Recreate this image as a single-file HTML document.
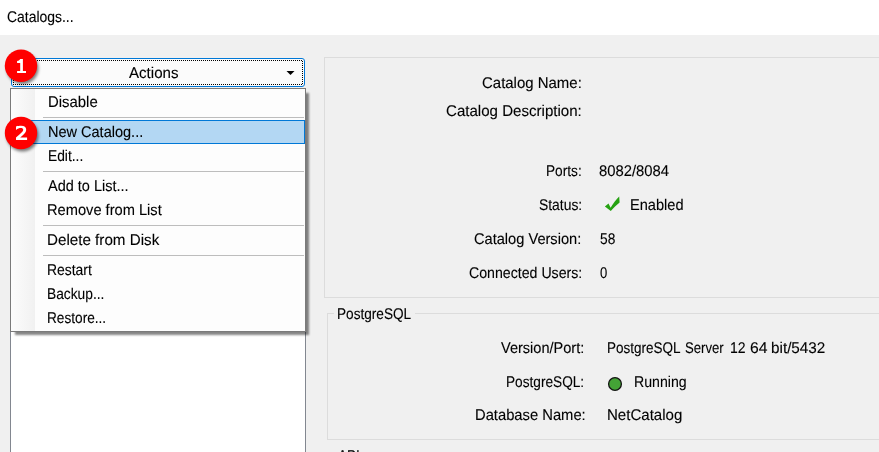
<!DOCTYPE html>
<html><head><meta charset="utf-8"><style>
html,body{margin:0;padding:0}
body{width:879px;height:452px;overflow:hidden;position:relative;background:#f0f0f0;font-family:"Liberation Sans",sans-serif;color:#000}
.t{position:absolute;font-size:15.5px;line-height:15.5px;text-rendering:geometricPrecision;white-space:pre;transform-origin:0 0;-webkit-text-stroke:0.12px #000}
.hdr{position:absolute;left:0;top:0;width:879px;height:35px;background:#fff}
.list{position:absolute;left:10px;top:90px;width:294px;height:400px;background:#fff;border:1px solid #828790}
.btn{position:absolute;left:11px;top:58px;width:292px;height:27px;border:1px solid #0078d7;border-radius:3px;background:#fbfbfb}
.dots{position:absolute;left:13px;top:60px;width:290px;height:25px;}
.grp{position:absolute;border:1px solid #dcdcdc}
.menu{position:absolute;left:10px;top:88px;width:294px;height:242px;border:1px solid #7a7a7a;background:#fdfdfd;box-shadow:4px 4px 2px -1px rgba(0,0,0,.48)}
.gut{position:absolute;left:11px;top:89px;width:24px;height:242px;background:linear-gradient(to right,#fcfcfc,#f1f1f1)}
.sep{position:absolute;left:43px;width:261px;height:1px;background:#bdbdbd}
.hl{position:absolute;left:12px;top:120px;width:291px;height:22px;border:1px solid #0078d7;background:#b3d7f3}
</style></head><body>
<div class="hdr"></div>
<span class="t" style="left:7.40px;top:10px;transform:scaleX(0.8986)">Catalogs...</span>
<div class="list"></div>
<div class="grp" style="left:324px;top:57px;width:600px;height:239px"></div>
<div class="grp" style="left:327px;top:313px;width:600px;height:125px"></div>
<div style="position:absolute;left:334px;top:305px;width:81px;height:16px;background:#f0f0f0"></div>
<div class="grp" style="left:327px;top:455px;width:600px;height:100px"></div>
<div style="position:absolute;left:334px;top:447px;width:30px;height:16px;background:#f0f0f0"></div>

<div class="btn"></div>
<svg style="position:absolute;left:0;top:0" width="879" height="452">
<path d="M13,60h1v1h-1zM15,60h1v1h-1zM17,60h1v1h-1zM19,60h1v1h-1zM21,60h1v1h-1zM23,60h1v1h-1zM25,60h1v1h-1zM27,60h1v1h-1zM29,60h1v1h-1zM31,60h1v1h-1zM33,60h1v1h-1zM35,60h1v1h-1zM37,60h1v1h-1zM39,60h1v1h-1zM41,60h1v1h-1zM43,60h1v1h-1zM45,60h1v1h-1zM47,60h1v1h-1zM49,60h1v1h-1zM51,60h1v1h-1zM53,60h1v1h-1zM55,60h1v1h-1zM57,60h1v1h-1zM59,60h1v1h-1zM61,60h1v1h-1zM63,60h1v1h-1zM65,60h1v1h-1zM67,60h1v1h-1zM69,60h1v1h-1zM71,60h1v1h-1zM73,60h1v1h-1zM75,60h1v1h-1zM77,60h1v1h-1zM79,60h1v1h-1zM81,60h1v1h-1zM83,60h1v1h-1zM85,60h1v1h-1zM87,60h1v1h-1zM89,60h1v1h-1zM91,60h1v1h-1zM93,60h1v1h-1zM95,60h1v1h-1zM97,60h1v1h-1zM99,60h1v1h-1zM101,60h1v1h-1zM103,60h1v1h-1zM105,60h1v1h-1zM107,60h1v1h-1zM109,60h1v1h-1zM111,60h1v1h-1zM113,60h1v1h-1zM115,60h1v1h-1zM117,60h1v1h-1zM119,60h1v1h-1zM121,60h1v1h-1zM123,60h1v1h-1zM125,60h1v1h-1zM127,60h1v1h-1zM129,60h1v1h-1zM131,60h1v1h-1zM133,60h1v1h-1zM135,60h1v1h-1zM137,60h1v1h-1zM139,60h1v1h-1zM141,60h1v1h-1zM143,60h1v1h-1zM145,60h1v1h-1zM147,60h1v1h-1zM149,60h1v1h-1zM151,60h1v1h-1zM153,60h1v1h-1zM155,60h1v1h-1zM157,60h1v1h-1zM159,60h1v1h-1zM161,60h1v1h-1zM163,60h1v1h-1zM165,60h1v1h-1zM167,60h1v1h-1zM169,60h1v1h-1zM171,60h1v1h-1zM173,60h1v1h-1zM175,60h1v1h-1zM177,60h1v1h-1zM179,60h1v1h-1zM181,60h1v1h-1zM183,60h1v1h-1zM185,60h1v1h-1zM187,60h1v1h-1zM189,60h1v1h-1zM191,60h1v1h-1zM193,60h1v1h-1zM195,60h1v1h-1zM197,60h1v1h-1zM199,60h1v1h-1zM201,60h1v1h-1zM203,60h1v1h-1zM205,60h1v1h-1zM207,60h1v1h-1zM209,60h1v1h-1zM211,60h1v1h-1zM213,60h1v1h-1zM215,60h1v1h-1zM217,60h1v1h-1zM219,60h1v1h-1zM221,60h1v1h-1zM223,60h1v1h-1zM225,60h1v1h-1zM227,60h1v1h-1zM229,60h1v1h-1zM231,60h1v1h-1zM233,60h1v1h-1zM235,60h1v1h-1zM237,60h1v1h-1zM239,60h1v1h-1zM241,60h1v1h-1zM243,60h1v1h-1zM245,60h1v1h-1zM247,60h1v1h-1zM249,60h1v1h-1zM251,60h1v1h-1zM253,60h1v1h-1zM255,60h1v1h-1zM257,60h1v1h-1zM259,60h1v1h-1zM261,60h1v1h-1zM263,60h1v1h-1zM265,60h1v1h-1zM267,60h1v1h-1zM269,60h1v1h-1zM271,60h1v1h-1zM273,60h1v1h-1zM275,60h1v1h-1zM277,60h1v1h-1zM279,60h1v1h-1zM281,60h1v1h-1zM283,60h1v1h-1zM285,60h1v1h-1zM287,60h1v1h-1zM289,60h1v1h-1zM291,60h1v1h-1zM293,60h1v1h-1zM295,60h1v1h-1zM297,60h1v1h-1zM299,60h1v1h-1zM301,60h1v1h-1zM302,61h1v1h-1zM302,63h1v1h-1zM302,65h1v1h-1zM302,67h1v1h-1zM302,69h1v1h-1zM302,71h1v1h-1zM302,73h1v1h-1zM302,75h1v1h-1zM302,77h1v1h-1zM302,79h1v1h-1zM302,81h1v1h-1zM302,83h1v1h-1zM13,84h1v1h-1zM15,84h1v1h-1zM17,84h1v1h-1zM19,84h1v1h-1zM21,84h1v1h-1zM23,84h1v1h-1zM25,84h1v1h-1zM27,84h1v1h-1zM29,84h1v1h-1zM31,84h1v1h-1zM33,84h1v1h-1zM35,84h1v1h-1zM37,84h1v1h-1zM39,84h1v1h-1zM41,84h1v1h-1zM43,84h1v1h-1zM45,84h1v1h-1zM47,84h1v1h-1zM49,84h1v1h-1zM51,84h1v1h-1zM53,84h1v1h-1zM55,84h1v1h-1zM57,84h1v1h-1zM59,84h1v1h-1zM61,84h1v1h-1zM63,84h1v1h-1zM65,84h1v1h-1zM67,84h1v1h-1zM69,84h1v1h-1zM71,84h1v1h-1zM73,84h1v1h-1zM75,84h1v1h-1zM77,84h1v1h-1zM79,84h1v1h-1zM81,84h1v1h-1zM83,84h1v1h-1zM85,84h1v1h-1zM87,84h1v1h-1zM89,84h1v1h-1zM91,84h1v1h-1zM93,84h1v1h-1zM95,84h1v1h-1zM97,84h1v1h-1zM99,84h1v1h-1zM101,84h1v1h-1zM103,84h1v1h-1zM105,84h1v1h-1zM107,84h1v1h-1zM109,84h1v1h-1zM111,84h1v1h-1zM113,84h1v1h-1zM115,84h1v1h-1zM117,84h1v1h-1zM119,84h1v1h-1zM121,84h1v1h-1zM123,84h1v1h-1zM125,84h1v1h-1zM127,84h1v1h-1zM129,84h1v1h-1zM131,84h1v1h-1zM133,84h1v1h-1zM135,84h1v1h-1zM137,84h1v1h-1zM139,84h1v1h-1zM141,84h1v1h-1zM143,84h1v1h-1zM145,84h1v1h-1zM147,84h1v1h-1zM149,84h1v1h-1zM151,84h1v1h-1zM153,84h1v1h-1zM155,84h1v1h-1zM157,84h1v1h-1zM159,84h1v1h-1zM161,84h1v1h-1zM163,84h1v1h-1zM165,84h1v1h-1zM167,84h1v1h-1zM169,84h1v1h-1zM171,84h1v1h-1zM173,84h1v1h-1zM175,84h1v1h-1zM177,84h1v1h-1zM179,84h1v1h-1zM181,84h1v1h-1zM183,84h1v1h-1zM185,84h1v1h-1zM187,84h1v1h-1zM189,84h1v1h-1zM191,84h1v1h-1zM193,84h1v1h-1zM195,84h1v1h-1zM197,84h1v1h-1zM199,84h1v1h-1zM201,84h1v1h-1zM203,84h1v1h-1zM205,84h1v1h-1zM207,84h1v1h-1zM209,84h1v1h-1zM211,84h1v1h-1zM213,84h1v1h-1zM215,84h1v1h-1zM217,84h1v1h-1zM219,84h1v1h-1zM221,84h1v1h-1zM223,84h1v1h-1zM225,84h1v1h-1zM227,84h1v1h-1zM229,84h1v1h-1zM231,84h1v1h-1zM233,84h1v1h-1zM235,84h1v1h-1zM237,84h1v1h-1zM239,84h1v1h-1zM241,84h1v1h-1zM243,84h1v1h-1zM245,84h1v1h-1zM247,84h1v1h-1zM249,84h1v1h-1zM251,84h1v1h-1zM253,84h1v1h-1zM255,84h1v1h-1zM257,84h1v1h-1zM259,84h1v1h-1zM261,84h1v1h-1zM263,84h1v1h-1zM265,84h1v1h-1zM267,84h1v1h-1zM269,84h1v1h-1zM271,84h1v1h-1zM273,84h1v1h-1zM275,84h1v1h-1zM277,84h1v1h-1zM279,84h1v1h-1zM281,84h1v1h-1zM283,84h1v1h-1zM285,84h1v1h-1zM287,84h1v1h-1zM289,84h1v1h-1zM291,84h1v1h-1zM293,84h1v1h-1zM295,84h1v1h-1zM297,84h1v1h-1zM299,84h1v1h-1zM301,84h1v1h-1zM13,62h1v1h-1zM13,64h1v1h-1zM13,66h1v1h-1zM13,68h1v1h-1zM13,70h1v1h-1zM13,72h1v1h-1zM13,74h1v1h-1zM13,76h1v1h-1zM13,78h1v1h-1zM13,80h1v1h-1zM13,82h1v1h-1z" fill="#000" shape-rendering="crispEdges"/>
<path d="M286.5,71 L294.5,71 L290.5,75 Z" fill="#000"/>
</svg>
<span class="t" style="left:129.30px;top:66px;transform:scaleX(0.9740)">Actions</span>
<div class="menu"></div>
<div class="gut"></div>
<div class="sep" style="top:117px"></div>
<div class="sep" style="top:171px"></div>
<div class="sep" style="top:225px"></div>
<div class="sep" style="top:255px"></div>
<div class="hl"></div>
<span class="t" style="left:47.54px;top:95px;transform:scaleX(0.9620)">Disable</span><span class="t" style="left:47.56px;top:125px;transform:scaleX(0.9364)">New Catalog...</span><span class="t" style="left:47.61px;top:149px;transform:scaleX(0.8892)">Edit...</span><span class="t" style="left:48.20px;top:179px;transform:scaleX(0.9341)">Add to List...</span><span class="t" style="left:47.26px;top:203px;transform:scaleX(0.9446)">Remove from List</span><span class="t" style="left:47.22px;top:233px;transform:scaleX(0.9796)">Delete from Disk</span><span class="t" style="left:47.30px;top:263px;transform:scaleX(0.8980)">Restart</span><span class="t" style="left:47.31px;top:287px;transform:scaleX(0.8887)">Backup...</span><span class="t" style="left:47.32px;top:311px;transform:scaleX(0.8800)">Restore...</span>
<span class="t" style="left:482.03px;top:76px;transform:scaleX(0.9653)">Catalog Name:</span><span class="t" style="left:446.23px;top:104px;transform:scaleX(0.9730)">Catalog Description:</span><span class="t" style="left:546.32px;top:164px;transform:scaleX(0.8816)">Ports:</span><span class="t" style="left:538.60px;top:198px;transform:scaleX(0.8957)">Status:</span><span class="t" style="left:474.36px;top:232px;transform:scaleX(0.9429)">Catalog Version:</span><span class="t" style="left:468.59px;top:266px;transform:scaleX(0.9131)">Connected Users:</span><span class="t" style="left:599.04px;top:164px;transform:scaleX(0.9569)">8082/8084</span><span class="t" style="left:630.46px;top:198px;transform:scaleX(0.9418)">Enabled</span><span class="t" style="left:599.61px;top:232px;transform:scaleX(0.8875)">58</span><span class="t" style="left:599.66px;top:266px;transform:scaleX(0.8429)">0</span><span class="t" style="left:337.42px;top:307px;transform:scaleX(0.8783)">PostgreSQL</span><span class="t" style="left:501.20px;top:341px;transform:scaleX(0.9386)">Version/Port:</span><span class="t" style="left:506.32px;top:375px;transform:scaleX(0.8805)">PostgreSQL:</span><span class="t" style="left:474.85px;top:408px;transform:scaleX(0.9518)">Database Name:</span><span class="t" style="left:606.73px;top:341px;transform:scaleX(0.8711)">PostgreSQL</span><span class="t" style="left:685.25px;top:341px;transform:scaleX(0.8489)">Server</span><span class="t" style="left:730.39px;top:341px;transform:scaleX(0.9062)">12</span><span class="t" style="left:749.79px;top:341px;transform:scaleX(1.0133)">64</span><span class="t" style="left:771.21px;top:341px;transform:scaleX(0.9852)">bit/5432</span><span class="t" style="left:634.09px;top:375px;transform:scaleX(0.9107)">Running</span><span class="t" style="left:606.53px;top:408px;transform:scaleX(0.9711)">NetCatalog</span><span class="t" style="left:337.50px;top:449px;transform:scaleX(0.8750)">API</span>
<svg style="position:absolute;left:0;top:0" width="879" height="452">
<defs><filter id="sh" x="-50%" y="-50%" width="200%" height="200%"><feGaussianBlur stdDeviation="1.8"/></filter></defs>
<path d="M604.9,206.4 L608.5,203.6 L610.6,207.7 C613,203.8 616,199.5 619.2,196.6 L619.6,202.6 C616.5,205 613.5,208 610.8,211 Z" fill="#26a212"/>
<circle cx="615" cy="384" r="6.4" fill="#44a336" stroke="#141414" stroke-width="1.3"/>
<circle cx="22.5" cy="68.3" r="16" fill="#000" opacity=".5" filter="url(#sh)"/>
<circle cx="21" cy="65.8" r="16.2" fill="#ff0000"/>
<path d="M20.2,59.1 L22.9,59.1 L22.9,71 L26,71 L26,72.9 L17.1,72.9 L17.1,71 L20.2,71 L20.2,62.9 L17.1,62.9 L17.1,61.1 C18.5,61 19.6,60.3 20.2,59.1 Z" fill="#fff"/>
<circle cx="22.5" cy="135.5" r="16" fill="#000" opacity=".5" filter="url(#sh)"/>
<circle cx="21" cy="133" r="16.2" fill="#ff0000"/>
<path d="M16,126.5 C17.5,125.9 19.5,125.8 21,125.8 C24.5,125.8 26.2,127.3 26.2,129.8 C26.2,132 24.8,133.5 22,136 L20.2,137.5 L27.1,137.5 L27.1,140 L16,140 L16,137.6 L20,134 C22.5,131.8 23.2,130.8 23.2,129.8 C23.2,128.6 22.3,128 20.8,128 C19.4,128 17.6,128.6 16,129.9 Z" fill="#fff"/>
</svg>
</body></html>
